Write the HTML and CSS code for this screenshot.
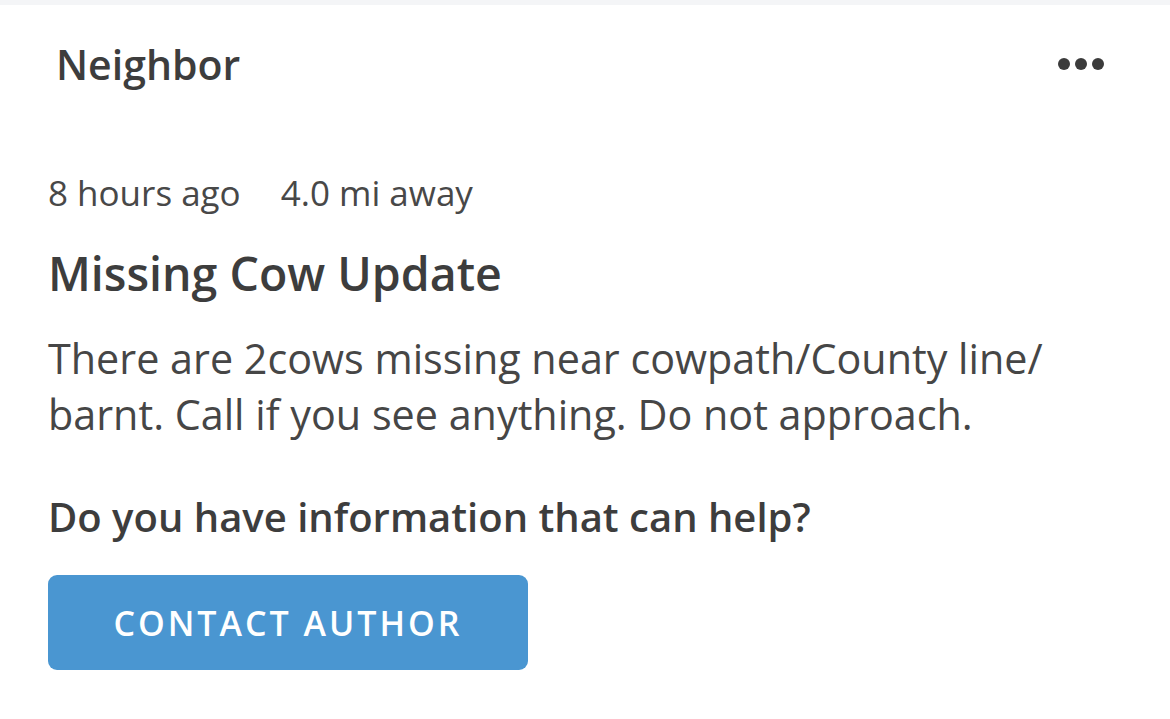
FILE: index.html
```html
<!DOCTYPE html>
<html lang="en">
<head>
    <meta charset="UTF-8">
    <meta name="viewport" content="width=device-width, initial-scale=1.0">
    <title>Neighbor post</title>
    <link rel="stylesheet" href="styles.css">
</head>
<body>
    <div class="topbar"></div>
    <div class="post">
        <div class="post-header">
            <h3 class="author">Neighbor</h3>
            <button class="more" aria-label="More">
                <span class="dot"></span><span class="dot"></span><span class="dot"></span>
            </button>
        </div>
        <div class="meta">
            <span>8 hours ago</span>
            <span>4.0 mi away</span>
        </div>
        <h2 class="title">Missing Cow Update</h2>
        <p class="body">There are 2cows missing near cowpath/County line/ barnt. Call if you see anything. Do not approach.</p>
        <p class="question">Do you have information that can help?</p>
        <button class="contact">CONTACT AUTHOR</button>
    </div>
</body>
</html>
```

FILE: styles.css
```css
body {
    margin: 0;
    font-family: "Open Sans", Lato, sans-serif;
    background-color: #ffffff;
    color: #3f3f3f;
}
.topbar {
    height: 5px;
    background-color: #f4f5f7;
}
.post {
    padding: 0 48px;
}
.post-header {
    display: flex;
    align-items: center;
    justify-content: space-between;
    padding: 35px 18px 0 8px;
}
.author {
    margin: 0;
    font-size: 41px;
    line-height: 48px;
    font-weight: 600;
    color: #3d3d3d;
}
.more {
    display: flex;
    gap: 5px;
    border: none;
    background: none;
    padding: 0;
}
.dot {
    width: 12px;
    height: 12px;
    border-radius: 50%;
    background-color: #3b3b3b;
}
.meta {
    display: flex;
    gap: 40px;
    margin-top: 85px;
    font-size: 35px;
    line-height: 40px;
    font-weight: 400;
    color: #484848;
}
.title {
    margin: 34px 0 0;
    font-size: 46.5px;
    line-height: 52px;
    font-weight: 600;
    color: #3d3d3d;
}
.body {
    margin: 31px 0 0;
    font-size: 41.3px;
    line-height: 56px;
    font-weight: 400;
    color: #464646;
}
.question {
    margin: 51px 0 0;
    font-size: 40px;
    line-height: 48px;
    font-weight: 600;
    color: #3d3d3d;
}
.contact {
    display: block;
    margin-top: 34px;
    width: 480px;
    height: 95px;
    border: none;
    border-radius: 9px;
    background-color: #4a96d1;
    color: #ffffff;
    font-family: inherit;
    font-size: 34px;
    font-weight: 600;
    letter-spacing: 3px;
}
```
